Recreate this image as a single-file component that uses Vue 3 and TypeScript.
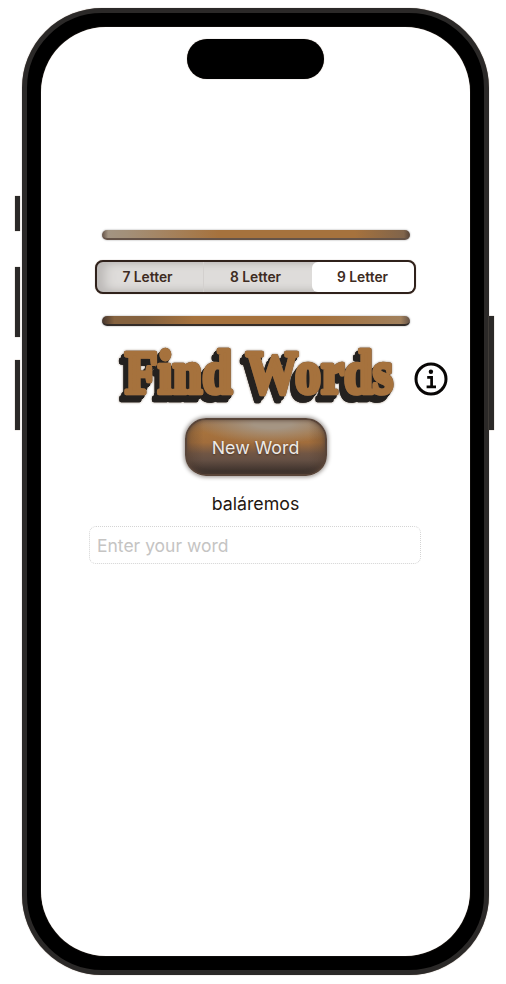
<script setup lang="ts">
import { ref } from 'vue'

const modes = ['7 Letter', '8 Letter', '9 Letter']
const selected = ref(2)
const currentWord = ref('baláremos')
const guess = ref('')
</script>

<template>
  <main class="stage">
    <div class="phone">
      <i class="key action"></i>
      <i class="key vol-up"></i>
      <i class="key vol-down"></i>
      <i class="key power"></i>
      <div class="screen">
        <div class="island"></div>
        <div class="bar first"></div>
        <div class="segments">
          <button
            v-for="(mode, i) in modes"
            :key="mode"
            :class="['segment', { on: i === selected }]"
            @click="selected = i"
          >{{ mode }}</button>
        </div>
        <div class="bar second"></div>
        <header class="heading">
          <svg class="title" width="284" height="64" viewBox="0 0 284 64">
            <text x="8" y="49" textLength="107" lengthAdjust="spacingAndGlyphs">Find</text>
            <text x="129" y="49" textLength="147" lengthAdjust="spacingAndGlyphs">Words</text>
          </svg>
          <svg class="info" width="34" height="34" viewBox="0 0 34 34" fill="none" stroke="#080605">
            <circle cx="17" cy="17" r="15" stroke-width="3" />
            <circle cx="16.9" cy="9.8" r="2.2" fill="#080605" stroke="none" />
            <path d="M13.2 15.4H17.6V24.5M12.6 24.8H22" stroke-width="2.7" />
          </svg>
        </header>
        <button class="new-word">New Word</button>
        <div class="word">{{ currentWord }}</div>
        <input v-model="guess" class="entry" placeholder="Enter your word" />
      </div>
    </div>
  </main>
</template>

<style>
body {
  background: #fff;
}
</style>

<style scoped>
.stage {
  box-sizing: border-box;
  width: 506px;
  height: 984px;
  padding: 8px 0 0 22px;
  overflow: hidden;
  font-family: Inter, "Liberation Sans", sans-serif;
}
.phone {
  position: relative;
  box-sizing: border-box;
  width: 467px;
  height: 967px;
  padding: 14px;
  background: #000;
  border: 5px solid #2b2928;
  border-radius: 80px;
  box-shadow: 0 0 1px #8d7b6d;
}
.screen {
  box-sizing: border-box;
  width: 429px;
  height: 929px;
  padding-top: 12px;
  display: flex;
  flex-direction: column;
  align-items: center;
  background: #fff;
  border-radius: 65px;
  box-shadow: 0 0 1px #8d7b6d;
}
.key {
  position: absolute;
  width: 5px;
  background: #2b2928;
  box-shadow: 0 0 1px #a39383;
}
.action { left: -12px; top: 183px; height: 35px; }
.vol-up { left: -12px; top: 254px; height: 70px; }
.vol-down { left: -12px; top: 347px; height: 70px; }
.power { right: -10px; top: 303px; height: 114px; }
.island {
  width: 137px;
  height: 40px;
  background: #000;
  border-radius: 20px;
  box-shadow: 0 0 1px #8d7b6d;
}
.bar {
  box-sizing: border-box;
  width: 308px;
  height: 10px;
  border-radius: 5px;
  border-bottom: 2px solid #655348;
  box-shadow: 0 0 2px #999;
}
.first {
  margin-top: 151px;
  background: linear-gradient(90deg, #655348 0, #a39482 2%, #a39079 8%, #a6723d 38%, #a6723d 82%, #80644b 98%, #554338 100%);
}
.second {
  margin-top: 22px;
  border-bottom-color: #332c28;
  background: linear-gradient(90deg, #45352c 0, #85623f 4%, #85623f 14%, #a6723d 30%, #a6723d 70%, #a1805c 97%, #655348 100%);
}
.segments {
  box-sizing: border-box;
  width: 321px;
  height: 34px;
  margin-top: 20px;
  display: grid;
  grid-template-columns: 107px 108px 1fr;
  border: 2px solid #2f211b;
  border-radius: 8px;
  overflow: hidden;
  background: #dedcda;
  box-shadow: inset 12px 0 12px -4px #bdbab8, inset 0 0 8px #b0acaa, 0 0 1px #9b8878;
}
.segment {
  padding: 1px 5px 0 0;
  border: 0;
  background: none;
  color: #3d2b22;
  font: 600 13.8px/29px Inter, sans-serif;
  white-space: nowrap;
}
.segment:first-child {
  border-right: 1px solid #d3d0ce;
}
.segment.on {
  padding-right: 1px;
  background: #fff;
  border-radius: 6px;
}
.heading {
  align-self: flex-end;
  width: 353px;
  height: 64px;
  margin-top: 18px;
  display: flex;
  align-items: center;
}
.title {
  overflow: visible;
  font-family: "Liberation Serif", serif;
  font-size: 62px;
  font-weight: 700;
  fill: #a6723d;
  stroke: #a6723d;
  stroke-width: 4.6px;
  stroke-linejoin: round;
  filter: drop-shadow(0 0 .5px #65503f) drop-shadow(-2px 3px 0 #24211f) drop-shadow(-3px 4px 0 #24211f) drop-shadow(0 0 1px #a39383);
}
.info {
  margin-left: 13px;
  margin-top: 6px;
}
.new-word {
  width: 142px;
  height: 58px;
  margin-top: 10px;
  padding: 0;
  border: 2px solid #594539;
  border-radius: 21px;
  color: #eeeae6;
  font: 400 17.8px/56px Inter, sans-serif;
  text-shadow: 0 1px 2px #49352a;
  background: linear-gradient(90deg, #49372b55 0, #49372b00 12%, #49372b00 88%, #49372b55 100%),
    radial-gradient(ellipse 55% 38% at 62% 6%, #a59583 25%, #a5958300 100%),
    linear-gradient(#9a7450 0, #a6723d 24%, #a16d3c 42%, #715644 62%, #655044 74%, #342b27 100%);
  box-shadow: inset 0 0 4px #594539, 0 0 4px 1px #928c88;
}
.word {
  margin-top: 16px;
  height: 24px;
  color: #1f1611;
  font-size: 17.8px;
  line-height: 24px;
}
.entry {
  box-sizing: border-box;
  width: 332px;
  height: 38px;
  margin: 10px 1px 0 0;
  padding: 0 7px;
  border: 1px dotted #d4d4d4;
  border-radius: 7px;
  outline: 0;
  background: #fff;
  color: #1f1611;
  font: 400 17.5px Inter, sans-serif;
}
.entry::placeholder {
  color: #c5c4c3;
  opacity: 1;
}
</style>
